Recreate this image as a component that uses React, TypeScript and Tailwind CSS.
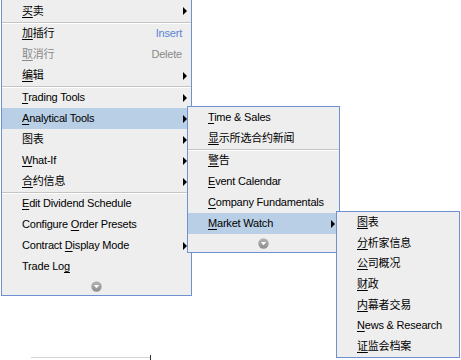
import React from "react";

type Item =
  | { sep: true }
  | {
      sep?: false;
      pre?: string;
      u?: string;
      post: string;
      sub?: boolean;
      shortcut?: string;
      shortcutColor?: string;
      disabled?: boolean;
      active?: boolean;
      h?: string;
    };

const Arrow = () => (
  <svg width="4" height="8" viewBox="0 0 4 8" className="block">
    <polygon points="0,0 4,4 0,8" fill="#000" />
  </svg>
);

const DownIcon = () => (
  <svg width="11" height="11" viewBox="0 0 11 11" className="block">
    <defs>
      <linearGradient id="g" x1="0" y1="0" x2="0" y2="1">
        <stop offset="0" stopColor="#b4b4b4" />
        <stop offset="1" stopColor="#8e8e8e" />
      </linearGradient>
    </defs>
    <circle cx="5.5" cy="5.5" r="5.2" fill="url(#g)" />
    <polygon points="2.8,4 8.2,4 5.5,7.2" fill="#fff" />
  </svg>
);

function Row({ it, rowH }: { it: Exclude<Item, { sep: true }>; rowH: string }) {
  const color = it.disabled ? "text-[#8a8a8a]" : "text-black";
  return (
    <div
      className={`flex items-center ${it.h ?? rowH} pl-[20px] pr-[4px] ${
        it.active ? "bg-[#b9cfe6]" : ""
      } ${color}`}
    >
      <span className="flex-1 whitespace-nowrap leading-none">
        {it.pre}
        {it.u && <span className="underline underline-offset-[2px] decoration-1">{it.u}</span>}
        {it.post}
      </span>
      {it.shortcut && (
        <span className={`whitespace-nowrap leading-none ${it.shortcutColor ?? ""}`}>{it.shortcut}</span>
      )}
      <span className="ml-[1px] w-[4px] flex items-center">{it.sub && <Arrow />}</span>
    </div>
  );
}

function Menu({
  items,
  className,
  rowH,
  more,
}: {
  items: Item[];
  className: string;
  rowH: string;
  more?: boolean;
}) {
  return (
    <div className={`absolute border border-[#6f91d1] bg-[#eeeeee] ${className}`}>
      {items.map((it, i) =>
        it.sep ? (
          <div key={i} className="h-px bg-[#c4c4c4] shadow-[0_1px_0_#ffffff]" />
        ) : (
          <Row key={i} it={it} rowH={rowH} />
        )
      )}
      {more && (
        <div className="h-[18px] flex items-center justify-center">
          <DownIcon />
        </div>
      )}
    </div>
  );
}

const menu1: Item[] = [
  { u: "买", post: "卖", sub: true, h: "h-[22px]" },
  { sep: true },
  { u: "加", post: "插行", shortcut: "Insert", shortcutColor: "text-[#5d84d3]" },
  { u: "取", post: "消行", shortcut: "Delete", disabled: true },
  { u: "编", post: "辑", sub: true },
  { sep: true },
  { u: "T", post: "rading Tools", sub: true },
  { u: "A", post: "nalytical Tools", sub: true, active: true },
  { post: "图表", sub: true },
  { u: "W", post: "hat-If", sub: true },
  { u: "合", post: "约信息", sub: true },
  { sep: true },
  { u: "E", post: "dit Dividend Schedule" },
  { pre: "Configure ", u: "O", post: "rder Presets" },
  { pre: "Contract ", u: "D", post: "isplay Mode", sub: true },
  { pre: "Trade Lo", u: "g", post: "" },
];

const menu2: Item[] = [
  { u: "T", post: "ime & Sales" },
  { u: "显", post: "示所选合约新闻" },
  { sep: true },
  { u: "警", post: "告" },
  { u: "E", post: "vent Calendar" },
  { u: "C", post: "ompany Fundamentals" },
  { u: "M", post: "arket Watch", sub: true, active: true },
];

const menu3: Item[] = [
  { u: "图", post: "表" },
  { u: "分", post: "析家信息" },
  { u: "公", post: "司概况" },
  { u: "财", post: "政" },
  { u: "内", post: "幕者交易" },
  { u: "N", post: "ews & Research" },
  { u: "证", post: "监会档案" },
];

export default function App() {
  return (
    <div
      className="relative w-[461px] h-[360px] bg-white overflow-hidden text-[11px] tracking-[-0.2px]"
      style={{ fontFamily: '"Liberation Sans", "Noto Sans CJK SC", sans-serif' }}
    >
      <div className="absolute left-[31px] top-[357px] w-[119px] h-px bg-[#d4d4d4]" />
      <div className="absolute left-[150px] top-[355px] w-px h-[5px] bg-[#333]" />
      <Menu items={menu1} className="left-[1px] top-[-1px] w-[191px]" rowH="h-[21px]" more />
      <Menu items={menu2} className="left-[187px] top-[106px] w-[153px]" rowH="h-[21px]" more />
      <Menu items={menu3} className="left-[336px] top-[211px] w-[124px]" rowH="h-[20.7px]" />
    </div>
  );
}
